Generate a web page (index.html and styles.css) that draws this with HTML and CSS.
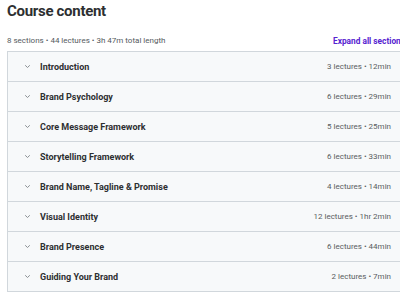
FILE: index.html
```html
<!DOCTYPE html>
<html>
<head>
<meta charset="utf-8">
<link rel="stylesheet" href="styles.css">
</head>
<body>
<div class="wrap">
  <h2 class="title">Course content</h2>
  <div class="meta">
    <span class="stats">8 sections • 44 lectures • 3h 47m total length</span>
    <span class="expand">Expand all sections</span>
  </div>
  <div class="sections">
    <div class="row"><span class="chev"><svg width="7" height="5" viewBox="0 0 7 5"><path d="M1.2 1.3 L3.5 3.5 L5.8 1.3" fill="none" stroke="#8a8f93" stroke-width="1"/></svg></span><span class="name">Introduction</span><span class="info">3 lectures • 12min</span></div>
    <div class="row"><span class="chev"><svg width="7" height="5" viewBox="0 0 7 5"><path d="M1.2 1.3 L3.5 3.5 L5.8 1.3" fill="none" stroke="#8a8f93" stroke-width="1"/></svg></span><span class="name">Brand Psychology</span><span class="info">6 lectures • 29min</span></div>
    <div class="row"><span class="chev"><svg width="7" height="5" viewBox="0 0 7 5"><path d="M1.2 1.3 L3.5 3.5 L5.8 1.3" fill="none" stroke="#8a8f93" stroke-width="1"/></svg></span><span class="name">Core Message Framework</span><span class="info">5 lectures • 25min</span></div>
    <div class="row"><span class="chev"><svg width="7" height="5" viewBox="0 0 7 5"><path d="M1.2 1.3 L3.5 3.5 L5.8 1.3" fill="none" stroke="#8a8f93" stroke-width="1"/></svg></span><span class="name">Storytelling Framework</span><span class="info">6 lectures • 33min</span></div>
    <div class="row"><span class="chev"><svg width="7" height="5" viewBox="0 0 7 5"><path d="M1.2 1.3 L3.5 3.5 L5.8 1.3" fill="none" stroke="#8a8f93" stroke-width="1"/></svg></span><span class="name">Brand Name, Tagline &amp; Promise</span><span class="info">4 lectures • 14min</span></div>
    <div class="row"><span class="chev"><svg width="7" height="5" viewBox="0 0 7 5"><path d="M1.2 1.3 L3.5 3.5 L5.8 1.3" fill="none" stroke="#8a8f93" stroke-width="1"/></svg></span><span class="name">Visual Identity</span><span class="info">12 lectures • 1hr 2min</span></div>
    <div class="row"><span class="chev"><svg width="7" height="5" viewBox="0 0 7 5"><path d="M1.2 1.3 L3.5 3.5 L5.8 1.3" fill="none" stroke="#8a8f93" stroke-width="1"/></svg></span><span class="name">Brand Presence</span><span class="info">6 lectures • 44min</span></div>
    <div class="row"><span class="chev"><svg width="7" height="5" viewBox="0 0 7 5"><path d="M1.2 1.3 L3.5 3.5 L5.8 1.3" fill="none" stroke="#8a8f93" stroke-width="1"/></svg></span><span class="name">Guiding Your Brand</span><span class="info">2 lectures • 7min</span></div>
  </div>
</div>
</body>
</html>
```

FILE: styles.css
```css
html, body {
  margin: 0;
  padding: 0;
  overflow: hidden;
  background: #ffffff;
}
body {
  font-family: Roboto, "Liberation Sans", sans-serif;
  color: #2d2f31;
}
.wrap {
  width: 398px;
  padding-left: 7px;
}
.title {
  margin: 0;
  padding-top: 2px;
  height: 28px;
  font-size: 15px;
  font-weight: 700;
  letter-spacing: -0.3px;
  line-height: 18px;
  color: #2d2f31;
}
.meta {
  display: flex;
  justify-content: space-between;
  align-items: center;
  height: 21px;
}
.stats {
  font-size: 8px;
  color: #555a5e;
}
.expand {
  font-size: 8.3px;
  font-weight: 700;
  color: #5624d0;
}
.sections {
  border: 1px solid #d1d7dc;
  border-right: none;
}
.row {
  display: flex;
  align-items: center;
  height: 29px;
  padding: 0 14px 0 16px;
  background: #f7f9fa;
  border-bottom: 1px solid #d1d7dc;
}
.row:last-child {
  border-bottom: none;
}
.chev {
  width: 16px;
  display: flex;
  align-items: center;
}
.name {
  flex: 1;
  font-size: 9px;
  font-weight: 700;
  color: #2d2f31;
}
.info {
  font-size: 8px;
  color: #595d61;
}
```
